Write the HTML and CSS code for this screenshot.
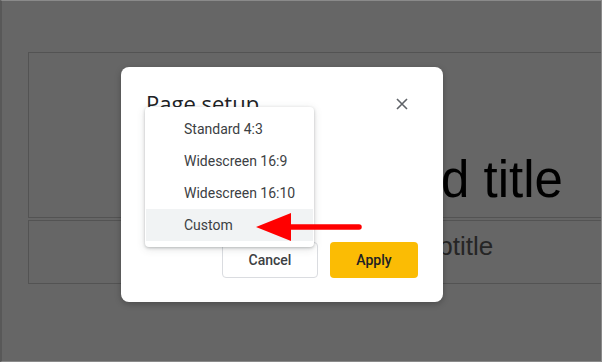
FILE: index.html
```html
<!DOCTYPE html>
<html lang="en">
<head>
    <meta charset="UTF-8">
    <title>Page setup</title>
    <link rel="stylesheet" href="styles.css">
</head>
<body>

    <div class="frame">
        <div class="slide">
            <div class="title-box">
                <span class="title-text">Click to add title</span>
            </div>
            <div class="subtitle-box">
                <span class="subtitle-text">Click to add subtitle</span>
            </div>
        </div>

        <div class="dialog">
            <div class="dialog-head">
                <h2>Page setup</h2>
                <button class="close-btn" aria-label="Close">
                    <svg width="12" height="12" viewBox="0 0 12 12">
                        <path d="M1 1 L11 11 M11 1 L1 11" stroke="#5f6368" stroke-width="1.6" fill="none"/>
                    </svg>
                </button>
            </div>

            <div class="dialog-body"></div>

            <div class="dialog-foot">
                <button class="btn btn-cancel">Cancel</button>
                <button class="btn btn-apply">Apply</button>
            </div>

            <!-- the opened size dropdown -->
            <ul class="menu">
                <li>Standard 4:3</li>
                <li>Widescreen 16:9</li>
                <li>Widescreen 16:10</li>
                <li class="active">Custom</li>
            </ul>
        </div>

        <!-- red arrow pointing at "Custom" -->
        <svg class="arrow" width="120" height="40" viewBox="0 0 120 40">
            <line x1="30" y1="16" x2="103" y2="16" stroke="#f00" stroke-width="5.5" stroke-linecap="round"/>
            <polygon points="0,16 35,2 35,30" fill="#f00"/>
        </svg>
    </div>

</body>
</html>
```

FILE: styles.css
```css
html, body {
    margin: 0;
    height: 100%;
    overflow: hidden;
}
body {
    background: #666666;
    font-family: Roboto, "Liberation Sans", Arial, sans-serif;
}
.frame {
    position: relative;
    box-sizing: border-box;
    width: 602px;
    height: 362px;
    border: 1px solid #8a8a8a;
    border-left: 2px solid #585858;
    background: #666666;
    overflow: hidden;
}
.slide {
    padding: 51px 0 0 26px;
    display: flex;
    flex-direction: column;
    gap: 2px;
}
.title-box,
.subtitle-box {
    width: 708px;
    border: 1px solid #535353;
    display: flex;
    justify-content: center;
    font-family: "Liberation Sans", Arial, sans-serif;
}
.title-box {
    height: 164px;
    align-items: flex-end;
}
.title-text {
    font-size: 51px;
    color: #000;
    line-height: 1;
    padding-bottom: 12px;
}
.subtitle-box {
    height: 62px;
    align-items: flex-start;
}
.subtitle-text {
    font-size: 26px;
    color: #252525;
    line-height: 30px;
    padding-top: 10px;
    padding-right: 5px;
}
.dialog {
    position: absolute;
    left: 119px;
    top: 66px;
    width: 322px;
    height: 235px;
    box-sizing: border-box;
    padding: 22px 25px 24px 25px;
    background: #fff;
    border-radius: 8px;
    box-shadow: 0 2px 6px rgba(0, 0, 0, 0.25);
    display: flex;
    flex-direction: column;
}
.dialog-head {
    display: flex;
    justify-content: space-between;
    align-items: flex-start;
}
.dialog-head h2 {
    margin: 0;
    font-family: "Open Sans", sans-serif;
    font-size: 22px;
    font-weight: 400;
    color: #202124;
    line-height: 28px;
}
.close-btn {
    border: none;
    background: none;
    padding: 0;
    margin: 9px 10px 0 0;
    width: 12px;
    height: 12px;
    display: flex;
}
.dialog-body {
    flex: 1;
}
.dialog-foot {
    display: flex;
    justify-content: flex-end;
    gap: 12px;
}
.btn {
    height: 36px;
    border-radius: 4px;
    font-family: Roboto, sans-serif;
    font-size: 14px;
    font-weight: 500;
    color: #3c4043;
    background: #fff;
}
.btn-cancel {
    width: 96px;
    border: 1px solid #dadce0;
}
.btn-apply {
    width: 88px;
    border: none;
    background: #fbbc04;
    color: #202124;
}
.menu {
    position: absolute;
    left: 24px;
    top: 40px;
    width: 169px;
    margin: 0;
    padding: 6px 1px;
    box-sizing: border-box;
    list-style: none;
    background: #fff;
    border-radius: 4px;
    box-shadow: 0 1px 3px rgba(60, 64, 67, 0.3), 0 2px 8px rgba(60, 64, 67, 0.15);
}
.menu li {
    height: 32px;
    line-height: 32px;
    padding-left: 38px;
    font-size: 14px;
    color: #3c4043;
}
.menu li.active {
    background: #f1f3f4;
}
.arrow {
    position: absolute;
    left: 254px;
    top: 210px;
}
```
